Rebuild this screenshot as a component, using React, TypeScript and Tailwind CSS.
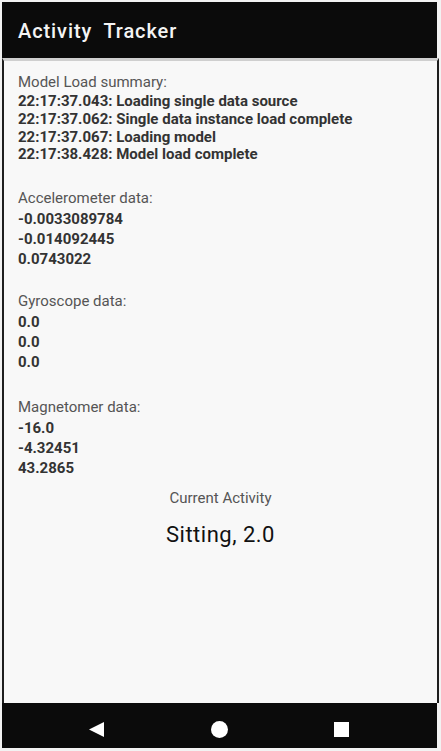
import React from 'react';

const sections = [
  { title: 'Accelerometer data:', values: ['-0.0033089784', '-0.014092445', '0.0743022'], gap: 'mt-[24px]' },
  { title: 'Gyroscope data:', values: ['0.0', '0.0', '0.0'], gap: 'mt-[22px]' },
  { title: 'Magnetomer data:', values: ['-16.0', '-4.32451', '43.2865'], gap: 'mt-[25px]' },
];

const summary = [
  '22:17:37.043: Loading single data source',
  '22:17:37.062: Single data instance load complete',
  '22:17:37.067: Loading model',
  '22:17:38.428: Model load complete',
];

export default function App() {
  return (
    <div className="w-[441px] h-[751px] bg-[#f2f2f2] flex flex-col pl-[2px] pr-[2px] pt-[2px] pb-[3px] font-['Roboto',sans-serif]">
      <header className="h-[56px] bg-[#0b0b0b] flex items-center pl-[16px] pt-[2px] mr-[2px] shrink-0">
        <h1 className="text-[#f4f4f4] text-[20px] font-medium tracking-[0.9px] leading-none whitespace-pre">Activity  Tracker</h1>
      </header>

      <main className="flex-1 bg-[#f8f8f8] border-x-2 border-[#1e1e1e] border-t-[3px] border-t-[#cfcfcf] pl-[14px] pt-[11px] flex flex-col">
        <div className="text-[15px] text-[#555] leading-[20px]">Model Load summary:</div>
        <div className="mt-[1px] text-[15px] font-bold text-[#333] leading-[17.8px]">
          {summary.map((line) => (
            <div key={line}>{line}</div>
          ))}
        </div>

        {sections.map((s) => (
          <div key={s.title} className={s.gap}>
            <div className="text-[15px] text-[#555] leading-[20px]">{s.title}</div>
            <div className="mt-[1px] text-[15px] font-bold text-[#333] leading-[20px]">
              {s.values.map((v, j) => (
                <div key={j}>{v}</div>
              ))}
            </div>
          </div>
        ))}

        <div className="mt-[10px] pr-[14px] flex flex-col items-center">
          <div className="text-[15px] text-[#555] leading-[20px]">Current Activity</div>
          <div className="mt-[13px] text-[22px] tracking-[0.5px] text-[#111] leading-[28px]">Sitting, 2.0</div>
        </div>
      </main>

      <nav className="h-[45px] bg-[#0b0b0b] mr-[2px] shrink-0 flex items-center pt-[7px] pl-[87px] gap-[107px]">
        <svg width="15" height="15" viewBox="0 0 15 15">
          <path d="M15 0 L15 15 L0 7.5 Z" fill="#fff" />
        </svg>
        <div className="w-[17px] h-[17px] rounded-full bg-white" />
        <div className="w-[15px] h-[15px] bg-white -ml-[1px]" />
      </nav>
    </div>
  );
}
